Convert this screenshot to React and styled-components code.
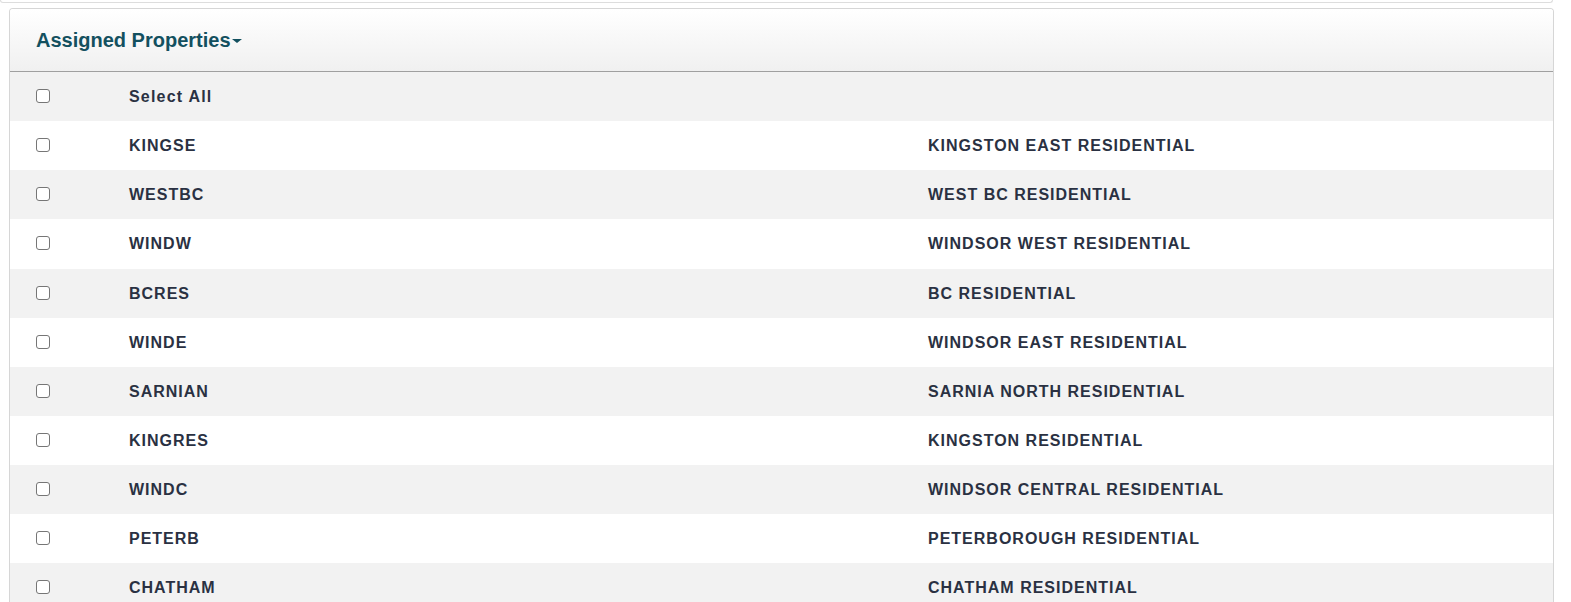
import React from "react";
import styled, { createGlobalStyle } from "styled-components";

const GlobalStyle = createGlobalStyle`
  body {
    margin: 0;
    background: #ffffff;
    font-family: "Liberation Sans", Arial, sans-serif;
  }
`;

const properties = [
  { code: "KINGSE", name: "KINGSTON EAST RESIDENTIAL" },
  { code: "WESTBC", name: "WEST BC RESIDENTIAL" },
  { code: "WINDW", name: "WINDSOR WEST RESIDENTIAL" },
  { code: "BCRES", name: "BC RESIDENTIAL" },
  { code: "WINDE", name: "WINDSOR EAST RESIDENTIAL" },
  { code: "SARNIAN", name: "SARNIA NORTH RESIDENTIAL" },
  { code: "KINGRES", name: "KINGSTON RESIDENTIAL" },
  { code: "WINDC", name: "WINDSOR CENTRAL RESIDENTIAL" },
  { code: "PETERB", name: "PETERBOROUGH RESIDENTIAL" },
  { code: "CHATHAM", name: "CHATHAM RESIDENTIAL" },
];

const Page = styled.div`
  padding: 0 17px 0 9px;
  height: 602px;
  overflow: hidden;
`;

const PrevCard = styled.div`
  height: 2px;
  margin-left: -9px;
  margin-right: 1px;
  border: 1px solid #dddddd;
  border-top: none;
  border-radius: 0 0 4px 4px;
`;

const Card = styled.section`
  margin-top: 5px;
  border: 1px solid #d6d6d6;
  border-bottom: none;
  border-radius: 4px 4px 0 0;
  overflow: hidden;
`;

const Header = styled.header`
  height: 62px;
  display: flex;
  align-items: center;
  padding-left: 26px;
  background: linear-gradient(to bottom, #ffffff 0%, #f0f0f0 100%);
  border-bottom: 1px solid #a0a0a0;
`;

const Title = styled.h2`
  margin: 0;
  font-size: 20px;
  font-weight: 700;
  color: #13505f;
  display: flex;
  align-items: center;
`;

const Caret = styled.span`
  display: inline-block;
  margin-left: 1px;
  margin-top: 2px;
  border-left: 5px solid transparent;
  border-right: 5px solid transparent;
  border-top: 4px solid #13505f;
`;

const Row = styled.label`
  display: grid;
  grid-template-columns: 93px 798px 1fr;
  align-items: center;
  height: 49.15px;
  padding-left: 26px;
  background: ${(p) => (p.$shaded ? "#f2f2f2" : "#ffffff")};
  color: #2a3142;
  font-size: 16px;
  font-weight: 700;
  letter-spacing: 1px;
`;

const Box = styled.input.attrs({ type: "checkbox" })`
  margin: 0 0 1px;
  width: 14px;
  height: 14px;
  appearance: none;
  border: 1px solid #767676;
  border-radius: 3px;
  background: #ffffff;
`;

const Cell = styled.span`
  white-space: nowrap;
  padding-top: 1px;
  padding-left: ${(p) => (p.$shift ? "1px" : "0")};
  letter-spacing: ${(p) => (p.$plain ? "1.2px" : "inherit")};
`;

export default function App() {
  return (
    <>
      <GlobalStyle />
      <Page>
        <PrevCard />
        <Card>
          <Header>
            <Title>
              Assigned Properties
              <Caret />
            </Title>
          </Header>
          <Row $shaded>
            <Box />
            <Cell $plain>Select All</Cell>
            <Cell />
          </Row>
          {properties.map((p, i) => (
            <Row key={p.code} $shaded={i % 2 === 1}>
              <Box />
              <Cell>{p.code}</Cell>
              <Cell $shift>{p.name}</Cell>
            </Row>
          ))}
        </Card>
      </Page>
    </>
  );
}
